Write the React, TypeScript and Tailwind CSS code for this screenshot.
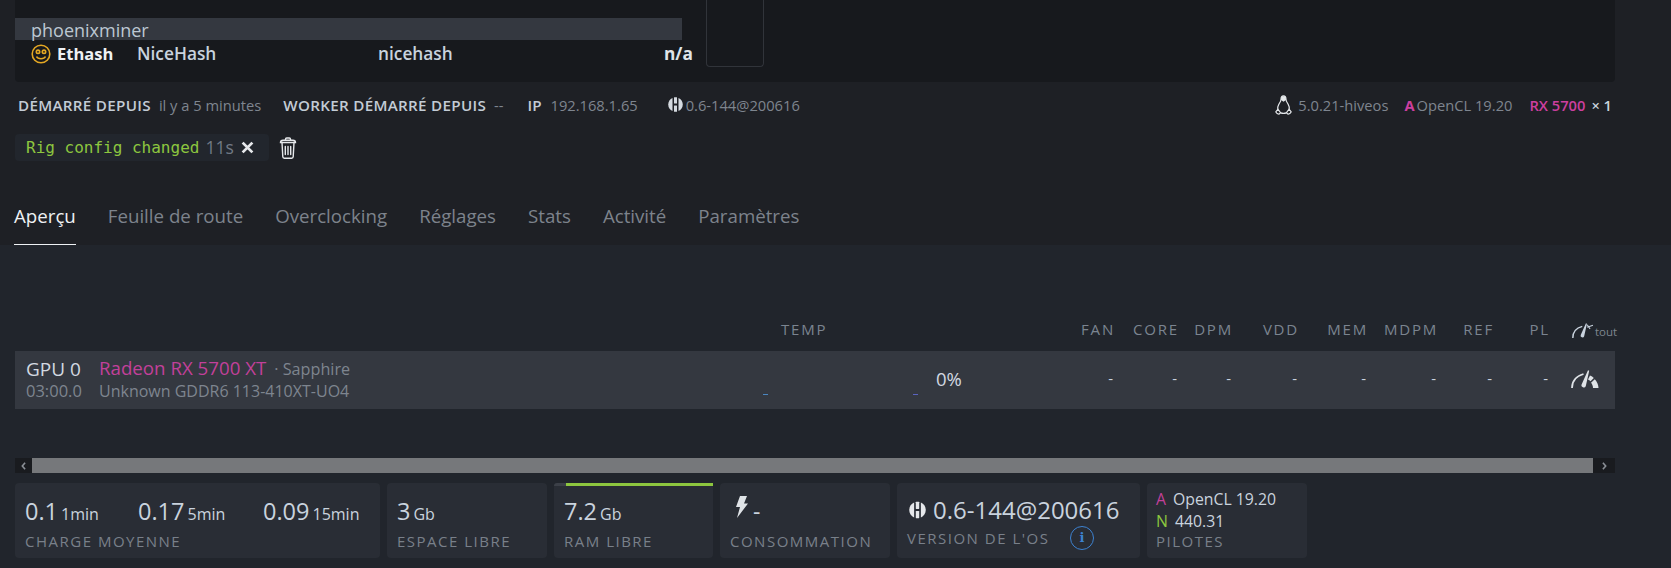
import React from 'react';

const font = { fontFamily: '"Open Sans", "Noto Sans", sans-serif' };

const columns = [
  { label: 'FAN', width: 'w-[64px]' },
  { label: 'CORE', width: 'w-[64px]' },
  { label: 'DPM', width: 'w-[54px]' },
  { label: 'VDD', width: 'w-[66px]' },
  { label: 'MEM', width: 'w-[69px]' },
  { label: 'MDPM', width: 'w-[70px]' },
  { label: 'REF', width: 'w-[56px]' },
  { label: 'PL', width: 'w-[56px]' },
];

const tabs = ['Feuille de route', 'Overclocking', 'Réglages', 'Stats', 'Activité', 'Paramètres'];

function HiveLogo({ className }: { className?: string }) {
  return (
    <svg viewBox="0 0 20 20" className={className} fill="currentColor">
      <path d="M6 1.300v17.400C2.600 17.400.3 14 .3 10S2.600 2.600 6 1.300z" />
      <path d="M14 1.300v17.400c3.400-1.300 5.700-4.700 5.700-8.700S17.400 2.600 14 1.300z" />
      <rect x="8" y="0.300" width="4" height="8.500" rx="0.500" />
      <rect x="8" y="11.200" width="4" height="8.500" rx="0.500" />
    </svg>
  );
}

function Penguin({ className }: { className?: string }) {
  return (
    <svg viewBox="0 0 20 24" className={className} fill="none" stroke="currentColor" strokeWidth="1.400">
      <path d="M10 1c-2.400 0-3 2-3 4 0 2.300-1 3.500-2.500 6C3.200 13.200 2.800 15.500 3.200 17.500M10 1c2.400 0 3 2 3 4 0 2.300 1 3.500 2.500 6 1.300 2.200 1.700 4.500 1.300 6.500" />
      <path d="M7 6c0-3 1-4.500 3-4.500S13 3 13 6l-3 2z" fill="currentColor" stroke="none" />
      <path d="M6.500 21.500c2 .7 5 .7 7 0" />
      <path d="M.8 20.300L3.300 17l3.200 4.200-1.500 1.600c-1.500.3-3.400-1-4.200-2.500zM19.200 20.300L16.700 17l-3.200 4.200 1.500 1.600c1.500.3 3.400-1 4.200-2.500z" />
    </svg>
  );
}

function Gauge({ className, full }: { className?: string; full?: boolean }) {
  return (
    <svg viewBox="0 0 28 18" className={className} fill="none" stroke="currentColor">
      <path d="M1 18C1 11.500 5 6 12.500 4" strokeWidth="1.800" />
      <path d="M10.600 14.500L17 .3l1.200.4-3.400 15.300a2.100 2.100 0 1 1-4.200-1.500z" fill="currentColor" stroke="none" />
      {full ? (
        <>
          <path d="M19 5.500c1.500.6 2.800 1.500 3.800 2.600l-3.300 3.200c-.7-.8-1.500-1.300-2.500-1.700z" fill="currentColor" stroke="none" />
          <path d="M23.800 9.200c2.300 2.600 3.700 5.600 3.700 8.800h-5.500c0-2.100-.8-3.900-2-5.300z" fill="currentColor" stroke="none" />
        </>
      ) : (
        <path d="M18.500 5l7-2.500M18.500 2l3.500 5" strokeWidth="1.300" />
      )}
    </svg>
  );
}

function StatCard({ width, label, children }: { width: string; label: string; children: React.ReactNode }) {
  return (
    <div className={`${width} h-[75px] shrink-0 rounded bg-[#292d35] px-[10px] flex flex-col`}>
      <div className="h-[48px] pt-[13px] flex items-baseline text-[#c9d3de] leading-[30px]">{children}</div>
      <div className="text-[15px] leading-[20px] tracking-[1.500px] text-[#79808a]">{label}</div>
    </div>
  );
}

function Metric({ value, unit, className }: { value: string; unit: string; className?: string }) {
  return (
    <span className={`flex items-baseline ${className ?? ''}`}>
      <span className="text-[23.500px] leading-[30px]">{value}</span>
      <span className="text-[16px] leading-[30px] ml-[3px]">{unit}</span>
    </span>
  );
}

export default function App() {
  return (
    <div style={font} className="w-[1671px] h-[568px] overflow-hidden bg-[#1e2025] text-[#c9d3de]">
      <div className="h-[245px] pl-[15px] pr-[56px]">
        {/* miner panel */}
        <div className="h-[82px] rounded-b bg-[#17191d] pt-[18px] flex">
          <div className="w-[667px]">
            <div className="h-[22px] bg-[#343840] pl-[16px] text-[18px] leading-[24px] text-[#bcc7d2]">phoenixminer</div>
            <div className="h-[28px] flex items-center pl-[16px] text-[17.300px] whitespace-nowrap">
              <svg viewBox="0 0 20 20" className="w-[20px] h-[20px] shrink-0" fill="none" stroke="#e5a823" strokeWidth="1.600">
                <circle cx="10" cy="10" r="8.800" />
                <circle cx="7" cy="7.800" r="1.700" />
                <circle cx="13" cy="7.800" r="1.700" />
                <path d="M5.500 12.500c1.500 3 7.500 3 9 0" />
              </svg>
              <span className="ml-[6px] w-[80px] shrink-0 text-[16.500px] font-bold text-[#eef1f4]">Ethash</span>
              <span className="w-[241px] shrink-0 font-semibold text-[#c9d3de]">NiceHash</span>
              <span className="w-[286px] shrink-0 font-semibold text-[#c9d3de]">nicehash</span>
              <span className="font-bold text-[#dfe4e9]">n/a</span>
            </div>
          </div>
          <div className="ml-[24px] w-[58px] h-[67px] -mt-[18px] rounded-b border border-t-0 border-[#31343a]" />
        </div>

        {/* rig info */}
        <div className="h-[46px] flex items-center justify-between pl-[3px] pr-[3px] text-[14.700px]">
          <div className="flex items-center">
            <span className="text-[15.200px] font-semibold text-[#c3ccd6] tracking-[0.300px]">DÉMARRÉ DEPUIS</span>
            <span className="ml-[8px] text-[#7e858f]">il y a 5 minutes</span>
            <span className="ml-[22px] text-[15.200px] font-semibold text-[#c3ccd6] tracking-[0.300px]">WORKER DÉMARRÉ DEPUIS</span>
            <span className="ml-[8px] text-[#7e858f]">--</span>
            <span className="ml-[24px] text-[15.200px] font-semibold text-[#c3ccd6]">IP</span>
            <span className="ml-[9px] text-[#7e858f]">192.168.1.65</span>
            <HiveLogo className="ml-[30px] w-[15px] h-[15px] text-[#d5dae0]" />
            <span className="ml-[3px] text-[#7e858f]">0.6-144@200616</span>
          </div>
          <div className="flex items-center">
            <Penguin className="w-[17px] h-[20px] text-[#e4e7ea]" />
            <span className="ml-[6px] text-[#7e858f]">5.0.21-hiveos</span>
            <span className="ml-[16px] font-bold text-[#cc3f9f]">A</span>
            <span className="ml-[2px] text-[#7e858f]">OpenCL 19.20</span>
            <span className="ml-[17px] font-semibold text-[#cc3f9f]">RX 5700</span>
            <span className="ml-[6px] font-semibold text-[#c9d3de]">× 1</span>
          </div>
        </div>

        {/* notice */}
        <div className="mt-[6px] flex items-center">
          <div className="h-[27px] w-[254px] rounded bg-[#22262d] pl-[11px] flex items-center">
            <span style={{ fontFamily: '"DejaVu Sans Mono", monospace' }} className="text-[16px] text-[#8dc63f]">Rig config changed</span>
            <span className="ml-[6px] text-[17.500px] text-[#717a85]">11s</span>
            <svg viewBox="0 0 12 12" className="ml-[7px] w-[13px] h-[13px]" stroke="#e6e8eb" strokeWidth="2.600">
              <path d="M1.500 1.500l9 9M10.500 1.500l-9 9" />
            </svg>
          </div>
          <svg viewBox="0 0 18 22" className="ml-[10px] w-[18px] h-[22px]" fill="none" stroke="#e6e8eb" strokeWidth="1.400" strokeLinecap="round">
            <path d="M1.500 5.500c0-1.500 1-2.300 2.500-2.300h10c1.500 0 2.500.8 2.500 2.300z" />
            <path d="M6.500 3V2.200a1.200 1.200 0 0 1 1.200-1.200h2.600a1.200 1.200 0 0 1 1.200 1.200V3" />
            <path d="M3 5.500l.8 14.300a1.500 1.500 0 0 0 1.500 1.400h7.400a1.500 1.500 0 0 0 1.500-1.400L15 5.500" />
            <path d="M6.300 9.500v8M9 9.500v8M11.700 9.500v8" />
          </svg>
        </div>

        {/* tabs */}
        <div className="mt-[39px] h-[45px] flex gap-[32px] text-[18.700px] text-[#7d838c] -ml-[1px]">
          <div className="h-[45px] leading-[32px] border-b border-[#eef1f4] text-[#eef1f4]">Aperçu</div>
          {tabs.map((tab) => (
            <div key={tab} className="leading-[32px]">{tab}</div>
          ))}
        </div>
      </div>

      <div className="h-[323px] bg-[#21252c] pl-[15px] pr-[56px]">
        {/* gpu table */}
        <div className="pt-[74px] h-[106px] flex items-start">
          <div className="w-[766px] shrink-0" />
          <div className="w-[270px] shrink-0 text-[15px] leading-[20px] tracking-[1.800px] text-[#7b8490]">TEMP</div>
          <div className="flex">
            {columns.map((col) => (
              <div key={col.label} className={`${col.width} text-right text-[15px] leading-[20px] tracking-[1.800px] text-[#7b8490]`}>
                {col.label}
              </div>
            ))}
            <div className="ml-[22px] flex items-end text-[#c9d3de]">
              <Gauge className="w-[23px] h-[17px] shrink-0" />
              <span className="text-[11.500px] leading-[14px] text-[#7e858f]">tout</span>
            </div>
          </div>
        </div>

        <div className="h-[58px] bg-[#343840] flex items-center pb-[3px]">
          <div className="w-[84px] pl-[11px]">
            <div className="text-[19px] leading-[24px] text-[#d3d9e0]">GPU 0</div>
            <div className="text-[16.500px] leading-[20px] text-[#7e858f]">03:00.0</div>
          </div>
          <div className="w-[649px]">
            <div className="leading-[24px]">
              <span className="text-[18.700px] text-[#c2409a]">Radeon RX 5700 XT</span>
              <span className="ml-[8px] text-[16.200px] text-[#7e858f]">· Sapphire</span>
            </div>
            <div className="text-[16px] leading-[20px] text-[#7e858f]">Unknown GDDR6 113-410XT-UO4</div>
          </div>
          <div className="relative w-[170px] h-full">
            <span className="absolute left-[15px] bottom-[11px] h-[1px] w-[5px] bg-[#4a86c0]" />
            <span className="absolute left-[165px] bottom-[11px] h-[1px] w-[5px] bg-[#5a63c0]" />
          </div>
          <div className="w-[133px] pl-[18px] text-[18.500px] text-[#d3d9e0]">0%</div>
          {columns.map((col) => (
            <div key={col.label} className={`${col.width} pr-[2px] text-right text-[15px] text-[#c9d3de]`}>-</div>
          ))}
          <Gauge full className="ml-[21px] w-[28px] h-[18px] text-[#dfe3e7]" />
        </div>

        {/* horizontal scrollbar */}
        <div className="mt-[49px] h-[15px] flex">
          <div className="w-[17px] bg-[#191b1f] flex items-center justify-center">
            <svg viewBox="0 0 6 10" className="w-[5px] h-[8px]" fill="none" stroke="#8a8f96" strokeWidth="2"><path d="M5 1L1.500 5 5 9" /></svg>
          </div>
          <div className="flex-1 bg-[#76787b]" />
          <div className="w-[22px] bg-[#191b1f] flex items-center justify-center">
            <svg viewBox="0 0 6 10" className="w-[5px] h-[8px]" fill="none" stroke="#8a8f96" strokeWidth="2"><path d="M1 1l3.500 4L1 9" /></svg>
          </div>
        </div>

        {/* stat cards */}
        <div className="mt-[10px] flex gap-[7px]">
          <StatCard width="w-[365px]" label="CHARGE MOYENNE">
            <Metric value="0.1" unit="1min" className="w-[113px]" />
            <Metric value="0.17" unit="5min" className="w-[125px]" />
            <Metric value="0.09" unit="15min" />
          </StatCard>
          <StatCard width="w-[160px]" label="ESPACE LIBRE">
            <Metric value="3" unit="Gb" />
          </StatCard>
          <div className="relative">
            <div className="absolute inset-x-0 top-0 h-[3px] rounded-t bg-[#3c4048]">
              <div className="ml-[12px] h-full bg-[#8dc63f]" />
            </div>
            <StatCard width="w-[159px]" label="RAM LIBRE">
              <Metric value="7.2" unit="Gb" />
            </StatCard>
          </div>
          <StatCard width="w-[170px]" label="CONSOMMATION">
            <svg viewBox="0 0 13 22" className="ml-[5px] self-start w-[13px] h-[22px]" fill="#dfe3e7">
              <path d="M5 0h7L9 7.500h4L2 22l3-11H1z" />
            </svg>
            <span className="ml-[5px] self-start text-[23px] leading-[30px]">-</span>
          </StatCard>
          <div className="w-[243px] h-[75px] rounded bg-[#292d35] px-[10px] flex flex-col">
            <div className="h-[43px] pt-[11px] flex items-center">
              <HiveLogo className="ml-[2px] w-[17px] h-[18px] text-[#e6e8eb]" />
              <span className="ml-[7px] text-[24px] text-[#c9d3de]">0.6-144@200616</span>
            </div>
            <div className="flex items-center text-[15px] tracking-[1.500px] text-[#79808a]">
              <span className="w-[163px]">VERSION DE L'OS</span>
              <span
                style={{ fontFamily: '"DejaVu Serif", serif' }}
                className="w-[24px] h-[24px] rounded-full border border-[#3d82d1] flex items-center justify-center text-[13px] font-bold text-[#3d82d1] tracking-normal"
              >
                i
              </span>
            </div>
          </div>
          <div className="w-[160px] h-[75px] rounded bg-[#292d35] px-[9px] pt-[5px] text-[15.800px] text-[#c9d3de]">
            <div className="leading-[23px]"><span className="text-[#c2409a]">A</span><span className="ml-[7px]">OpenCL 19.20</span></div>
            <div className="leading-[20px]"><span className="text-[#8dc63f]">N</span><span className="ml-[7px]">440.31</span></div>
            <div className="text-[15px] leading-[21px] tracking-[1.500px] text-[#79808a]">PILOTES</div>
          </div>
        </div>
      </div>
    </div>
  );
}
